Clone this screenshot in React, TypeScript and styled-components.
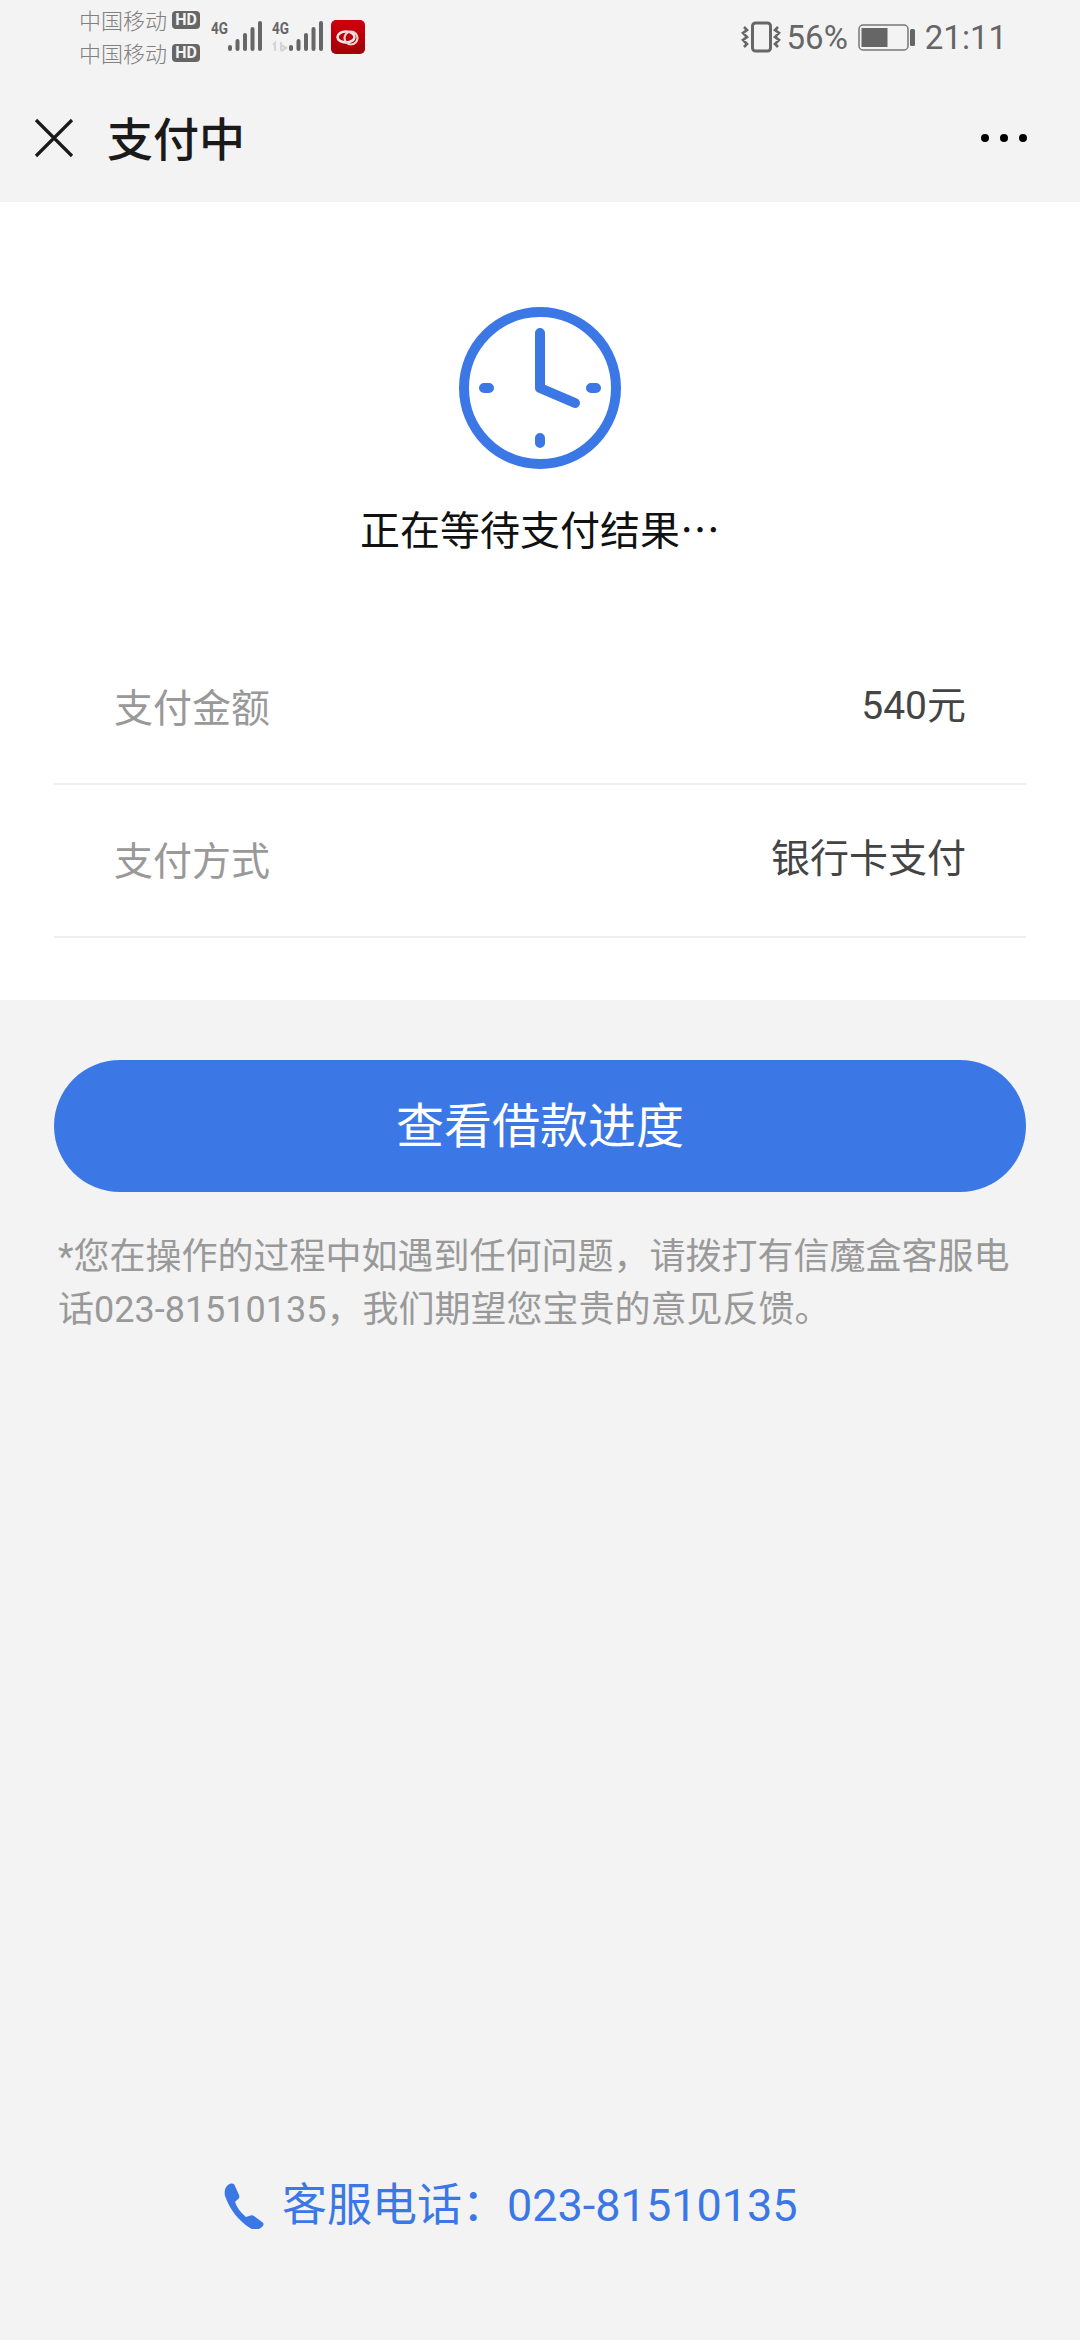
import React from 'react';
import styled, { createGlobalStyle } from 'styled-components';

const FONT = '"Roboto", "Noto Sans CJK SC", sans-serif';
const BLUE = '#3b78e6';
const BG = '#f3f3f3';

const GlobalStyle = createGlobalStyle`
    html, body {
        margin: 0;
        padding: 0;
        background: ${BG};
        font-family: ${FONT};
    }
`;

const SignalIcon = ({ extra }: { extra?: boolean }) => (
    <svg width="51" height="36" viewBox="0 0 51 36">
        <text x="0" y="18" fontSize="17" fontWeight="700" fill="#666" fontFamily="Roboto, sans-serif" textLength="17" lengthAdjust="spacingAndGlyphs">4G</text>
        {extra && <path d="M3 35v-8l-2 2M9 26v9M9 29l5 3-5 3" stroke="#d4d4d4" strokeWidth="2.2" fill="none" />}
        <rect x="17" y="29" width="4" height="6" rx="2" fill="#666" />
        <rect x="24.5" y="23" width="4" height="12" rx="2" fill="#666" />
        <rect x="32" y="17" width="4" height="18" rx="2" fill="#666" />
        <rect x="39.5" y="11" width="4" height="24" rx="2" fill="#666" />
        <rect x="47" y="5" width="4" height="30" rx="2" fill="#666" />
    </svg>
);

const App = () => {
    return (
        <Page>
            <GlobalStyle />
            <StatusBar>
                <Carriers>
                    <Carrier>中国移动<HdTag>HD</HdTag></Carrier>
                    <Carrier>中国移动<HdTag>HD</HdTag></Carrier>
                </Carriers>
                <Signals>
                    <SignalIcon />
                    <SignalIcon extra />
                </Signals>
                <AppBadge>
                    <svg width="34" height="34" viewBox="0 0 34 34">
                        <defs>
                            <linearGradient id="badge" x1="0" y1="0" x2="0" y2="1">
                                <stop offset="0" stopColor="#d0000c" />
                                <stop offset="1" stopColor="#a00008" />
                            </linearGradient>
                        </defs>
                        <rect width="34" height="34" rx="5" fill="url(#badge)" />
                        <ellipse cx="15" cy="17" rx="8.5" ry="5.5" fill="none" stroke="#f7e4e4" strokeWidth="2.6" />
                        <circle cx="20" cy="18" r="6.5" fill="none" stroke="#f0d0d0" strokeWidth="2.2" />
                    </svg>
                </AppBadge>
                <StatusRight>
                    <svg width="40" height="32" viewBox="0 0 40 32">
                        <rect x="11.5" y="2" width="18" height="28" rx="3" fill="none" stroke="#666" strokeWidth="3" />
                        <path d="M3 6l3 3-4 3 4 4-4 3 4 4-3 3M37 6l-3 3 4 3-4 4 4 3-4 4 3 3" stroke="#666" strokeWidth="2.6" fill="none" />
                    </svg>
                    <StatusText>56%</StatusText>
                    <svg width="57" height="27" viewBox="0 0 57 27">
                        <rect x="1" y="1" width="49" height="25" rx="4" fill="none" stroke="#777" strokeWidth="1.5" />
                        <rect x="3.5" y="4" width="26" height="19" fill="#666" />
                        <rect x="52" y="5" width="5" height="17" rx="1.5" fill="#666" />
                    </svg>
                    <StatusTime>21:11</StatusTime>
                </StatusRight>
            </StatusBar>
            <NavBar>
                <svg width="40" height="40" viewBox="0 0 40 40">
                    <path d="M2 2L38 38M38 2L2 38" stroke="#1a1a1a" strokeWidth="3.2" fill="none" />
                </svg>
                <NavTitle>支付中</NavTitle>
                <MoreDots>
                    <i /><i /><i />
                </MoreDots>
            </NavBar>
            <Panel>
                <ClockWrap>
                    <svg width="162" height="162" viewBox="0 0 162 162">
                        <circle cx="81" cy="81" r="76" fill="none" stroke={BLUE} strokeWidth="10" />
                        <path d="M81 26V81L116 96" fill="none" stroke={BLUE} strokeWidth="10" strokeLinecap="round" strokeLinejoin="round" />
                        <path d="M25 81h5M132 81h5M81 131v5" fill="none" stroke={BLUE} strokeWidth="10" strokeLinecap="round" />
                    </svg>
                </ClockWrap>
                <WaitText>正在等待支付结果…</WaitText>
                <InfoList>
                    <InfoRow>
                        <InfoLabel>支付金额</InfoLabel>
                        <InfoValue>540元</InfoValue>
                    </InfoRow>
                    <InfoRow>
                        <InfoLabel>支付方式</InfoLabel>
                        <InfoValue>银行卡支付</InfoValue>
                    </InfoRow>
                </InfoList>
            </Panel>
            <Body>
                <ProgressButton>查看借款进度</ProgressButton>
                <Notice>*您在操作的过程中如遇到任何问题，请拨打有信魔盒客服电话023-81510135，我们期望您宝贵的意见反馈。</Notice>
            </Body>
            <HotLine>
                <svg width="40" height="46" viewBox="0 0 40 46">
                    <path d="M4 2c3-2 6-2 7 1l4 9c1 2 0 4-2 5l-2 2c2 6 6 11 11 15l3-1c2-1 4-1 5 0l8 6c2 1 2 3 0 5l-3 2c-3 1-6 1-9-1C15 38 6 27 1 13 0 9 1 4 4 2z" fill={BLUE} />
                </svg>
                <HotLineText>客服电话：023-81510135</HotLineText>
            </HotLine>
        </Page>
    );
};

const Page = styled.div`
    display: flex;
    flex-direction: column;
    width: 1080px;
    height: 2340px;
    background: ${BG};
    overflow: hidden;
`;

const StatusBar = styled.div`
    display: flex;
    align-items: center;
    height: 74px;
    padding: 0 73px 0 79px;
    box-sizing: border-box;
`;

const Carriers = styled.div`
    display: flex;
    flex-direction: column;
    gap: 13px;
    margin-top: -4px;
`;

const Carrier = styled.div`
    display: flex;
    align-items: center;
    height: 20px;
    font-size: 22px;
    font-weight: 300;
    color: #808080;
`;

const HdTag = styled.span`
    width: 28px;
    height: 18px;
    margin: 2px 0 0 5px;
    line-height: 18px;
    text-align: center;
    border-radius: 4px;
    background: #666;
    color: ${BG};
    font-size: 16px;
    font-weight: 700;
`;

const Signals = styled.div`
    display: flex;
    gap: 10px;
    margin: -6px 0 0 11px;
`;

const AppBadge = styled.div`
    display: flex;
    margin-left: 8px;
`;

const StatusRight = styled.div`
    display: flex;
    align-items: center;
    margin-left: auto;
`;

const StatusText = styled.span`
    margin: 0 10px 0 6px;
    font-size: 33px;
    color: #666;
`;

const StatusTime = styled(StatusText)`
    margin: 0 0 0 10px;
`;

const NavBar = styled.div`
    display: flex;
    align-items: center;
    height: 128px;
    padding: 0 53px 0 34px;
`;

const NavTitle = styled.h1`
    margin: -4px 0 0 33px;
    font-size: 46px;
    font-weight: 500;
    color: #1a1a1a;
`;

const MoreDots = styled.div`
    display: flex;
    gap: 11px;
    margin-left: auto;

    i {
        width: 8px;
        height: 8px;
        border-radius: 50%;
        background: #000;
    }
`;

const Panel = styled.section`
    display: flex;
    flex-direction: column;
    align-items: center;
    height: 798px;
    padding: 0 54px;
    box-sizing: border-box;
    background: #fff;
`;

const ClockWrap = styled.div`
    display: flex;
    margin-top: 105px;
`;

const WaitText = styled.div`
    margin-top: 31px;
    font-family: "Noto Sans CJK SC", sans-serif;
    font-size: 40px;
    line-height: 56px;
    color: #111;
`;

const InfoList = styled.div`
    align-self: stretch;
    margin-top: 76px;
`;

const InfoRow = styled.div`
    display: flex;
    align-items: center;
    justify-content: space-between;
    height: 151px;
    padding: 0 60px;
    border-bottom: 2px solid #eeeeee;
`;

const InfoLabel = styled.span`
    margin-top: -6px;
    font-size: 39px;
    color: #999;
`;

const InfoValue = styled.span`
    margin-top: -11px;
    font-size: 39px;
    color: #444;
`;

const Body = styled.div`
    padding: 60px 54px 0;
`;

const ProgressButton = styled.button`
    display: block;
    width: 100%;
    height: 132px;
    padding: 0 0 8px;
    border: none;
    border-radius: 66px;
    background: ${BLUE};
    color: #fff;
    font-family: ${FONT};
    font-size: 48px;
`;

const Notice = styled.p`
    margin: 39px 10px 0 4px;
    font-size: 36px;
    line-height: 53px;
    color: #999;
`;

const HotLine = styled.div`
    display: flex;
    align-items: center;
    gap: 18px;
    margin-top: auto;
    padding: 0 0 111px 224px;
`;

const HotLineText = styled.span`
    font-size: 45px;
    line-height: 46px;
    color: ${BLUE};
`;

export default App;
